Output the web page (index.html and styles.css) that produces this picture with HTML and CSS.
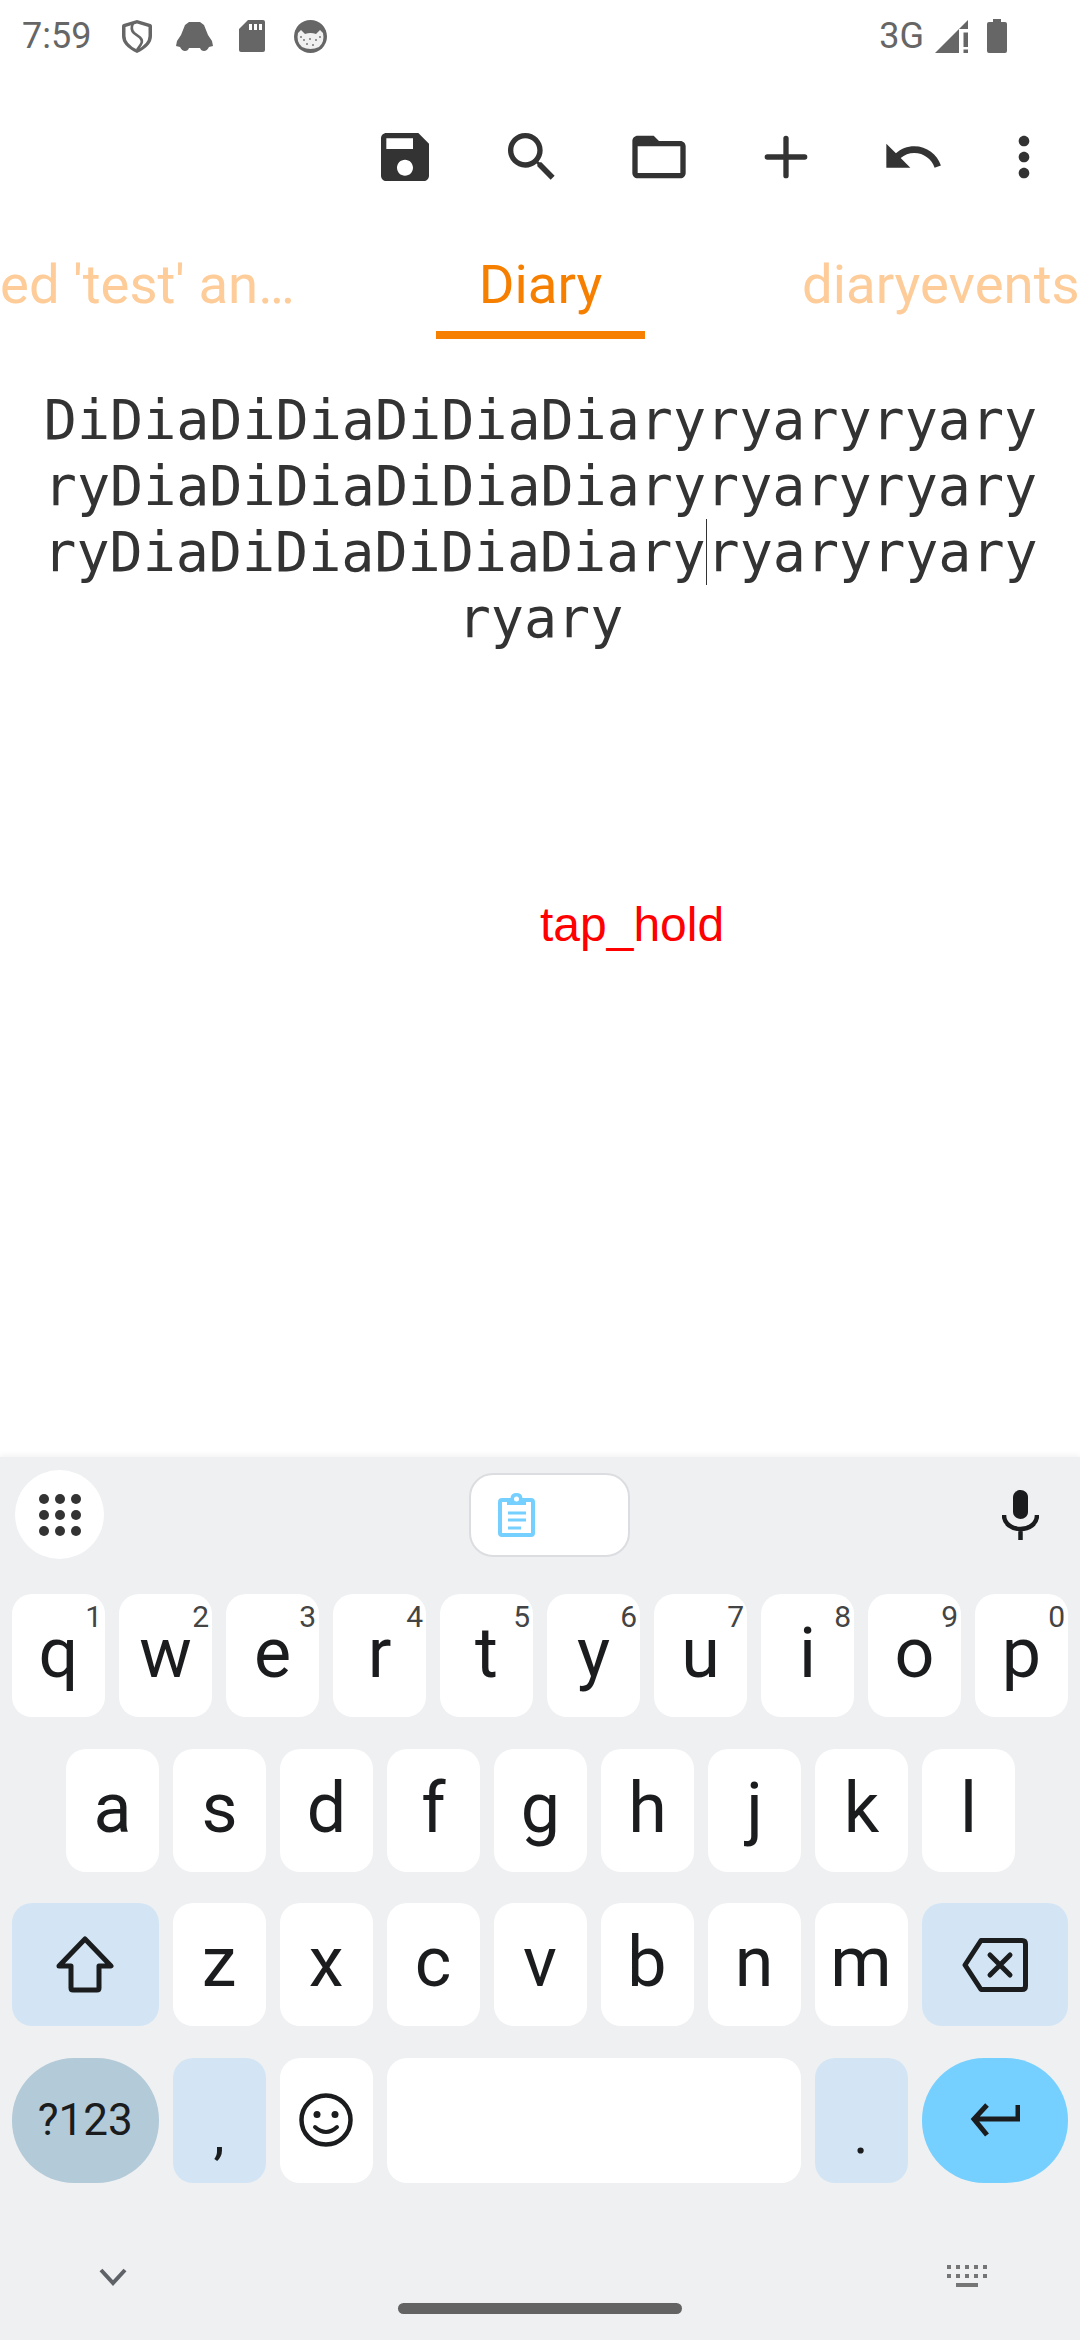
FILE: index.html
```html
<!DOCTYPE html>
<html>
<head>
	<title>Diary</title>
	<meta name="viewport" content="width=device-width, initial-scale=1" />
	<link rel="stylesheet" href="styles.css">
</head>
<body>
	<div class="App">

		<div class="StatusBar">
			<span class="Time">7:59</span>
			<svg class="StatusIcon Shield" viewBox="0 0 30 33"><path d="M15 0 L28.500 4 Q30 4.500 30 6 V16 Q30 26 15 33 Q0 26 0 16 V6 Q0 4.500 1.500 4 Z M15 3.500 L3.500 7 V16 Q3.500 24 15 29.500 Q26.500 24 26.500 16 V7 Z" fill-rule="evenodd"/><path d="M11 3.500 Q8 9 12 13 L18 17.500 Q21.500 21 18.500 25 L15 30" fill="none" stroke="#666" stroke-width="2.600"/></svg>
			<svg class="StatusIcon Blob" viewBox="0 0 37 30"><path d="M13 1 H24 L28 4 L32 14 L36 20 L37 25 L33 26 Q31 30 28 30 Q25 30 24 27 H13 Q12 30 9 30 Q6 30 4 26 L0 25 L1 20 L5 14 L9 4 Z"/></svg>
			<svg class="StatusIcon Sdcard" viewBox="0 0 26 32"><path d="M9 0 H24 Q26 0 26 2 V30 Q26 32 24 32 H2 Q0 32 0 30 V9 Z M10 4 V10 H13 V4 Z M15 4 V10 H18 V4 Z M20 4 V10 H23 V4 Z" fill-rule="evenodd"/></svg>
			<svg class="StatusIcon Cat" viewBox="0 0 33 33"><circle cx="16.500" cy="16.500" r="16.500"/><path d="M4 13 L7 10 L11 14 Q16.500 12 22 14 L26 10 L29 13 Q31 22 25 27 Q16.500 31 8 27 Q2 22 4 13 Z" fill="#f0f0f0"/><g fill="#777"><circle cx="10" cy="20" r="1"/><circle cx="16" cy="19" r="1"/><circle cx="22" cy="20" r="1"/><circle cx="13" cy="24" r="1"/><circle cx="19" cy="25" r="1"/><circle cx="7" cy="17" r="1"/><circle cx="26" cy="17" r="1"/></g></svg>
			<span class="StatusSpacer"></span>
			<span class="NetType">3G</span>
			<svg class="StatusIcon Signal" viewBox="0 0 33 33"><path d="M33 0 V9 H24 V33 H0 Z"/><path d="M28.500 12.500 H33 V27 H28.500 Z M28.500 29.500 H33 V33 H28.500 Z"/></svg>
			<svg class="StatusIcon Battery" viewBox="0 0 20 34"><path d="M6 0 H14 V3 H18 Q20 3 20 5 V32 Q20 34 18 34 H2 Q0 34 0 32 V5 Q0 3 2 3 H6 Z"/></svg>
		</div>

		<div class="Toolbar">
			<button class="ToolButton"><svg viewBox="0 0 24 24"><path d="M17 3H5c-1.110 0-2 .9-2 2v14c0 1.100.89 2 2 2h14c1.100 0 2-.9 2-2V7l-4-4zm-5 16c-1.660 0-3-1.340-3-3s1.340-3 3-3 3 1.340 3 3-1.340 3-3 3zm3-10H5V5h10v4z"/></svg></button>
			<button class="ToolButton"><svg viewBox="0 0 24 24"><path d="M15.500 14h-.79l-.28-.27C15.410 12.590 16 11.110 16 9.500 16 5.910 13.090 3 9.500 3S3 5.910 3 9.500 5.910 16 9.500 16c1.610 0 3.090-.59 4.230-1.570l.27.28v.79l5 4.990L20.490 19l-4.990-5zm-6 0C7.010 14 5 11.990 5 9.500S7.010 5 9.500 5 14 7.010 14 9.500 11.990 14 9.500 14z"/></svg></button>
			<button class="ToolButton"><svg viewBox="0 0 24 24"><path d="M20 6h-8l-2-2H4c-1.100 0-1.990.9-1.990 2L2 18c0 1.100.9 2 2 2h16c1.100 0 2-.9 2-2V8c0-1.100-.9-2-2-2zm0 12H4V8h16v10z"/></svg></button>
			<button class="ToolButton"><svg viewBox="0 0 24 24"><path d="M5 12h14M12 5v14" fill="none" stroke="#333" stroke-width="2" stroke-linecap="round"/></svg></button>
			<button class="ToolButton"><svg viewBox="0 0 24 24"><path d="M12.500 8c-2.650 0-5.050.99-6.900 2.600L2 7v9h9l-3.620-3.620c1.390-1.160 3.160-1.880 5.120-1.880 3.540 0 6.550 2.310 7.600 5.500l2.370-.78C21.080 11.030 17.150 8 12.500 8z"/></svg></button>
			<button class="ToolButton MoreButton"><svg viewBox="0 0 24 24"><path d="M12 8c1.100 0 2-.9 2-2s-.9-2-2-2-2 .9-2 2 .9 2 2 2zm0 2c-1.100 0-2 .9-2 2s.9 2 2 2 2-.9 2-2-.9-2-2-2zm0 6c-1.100 0-2 .9-2 2s.9 2 2 2 2-.9 2-2-.9-2-2-2z"/></svg></button>
		</div>

		<div class="Tabs">
			<div class="Tab TabLeft">ed 'test' an…</div>
			<div class="Tab TabActive">Diary</div>
			<div class="Tab TabRight">diaryevents</div>
		</div>

		<div class="Editor">
			<div class="EditorText">DiDiaDiDiaDiDiaDiaryryaryryary<br>ryDiaDiDiaDiDiaDiaryryaryryary<br>ryDiaDiDiaDiDiaDiary<span class="Caret"></span>ryaryryary<br>ryary</div>
			<div class="Toast">tap_hold</div>
		</div>

		<div class="Keyboard">
			<div class="KeyTools">
				<div class="ToolCircle">
					<svg viewBox="0 0 42 42" width="42" height="42"><g fill="#333"><circle cx="5" cy="5" r="5"/><circle cx="21" cy="5" r="5"/><circle cx="37" cy="5" r="5"/><circle cx="5" cy="21" r="5"/><circle cx="21" cy="21" r="5"/><circle cx="37" cy="21" r="5"/><circle cx="5" cy="37" r="5"/><circle cx="21" cy="37" r="5"/><circle cx="37" cy="37" r="5"/></g></svg>
				</div>
				<div class="ClipButton">
					<svg viewBox="0 0 37 44" width="37" height="44"><path d="M12.500 5 Q13 0 18.500 0 Q24 0 24.500 5 H33 Q37 5 37 9 V40 Q37 44 33 44 H4 Q0 44 0 40 V9 Q0 5 4 5 Z M18.500 3.500 A2.500 2.500 0 1 0 18.500 8.500 A2.500 2.500 0 1 0 18.500 3.500 Z M4 9 V40 H33 V9 H28 V12 H9 V9 Z M10 18.500 H28 V21.500 H10 Z M10 25.500 H28 V28.500 H10 Z M10 33.500 H23 V36.500 H10 Z" fill="#76d0ff" fill-rule="evenodd"/></svg>
				</div>
				<div class="MicButton">
					<svg viewBox="0 0 37 50" width="37" height="50"><path d="M18.500 0 C22.500 0 26 3 26 7 V22 C26 26 22.500 29 18.500 29 C14.500 29 11 26 11 22 V7 C11 3 14.500 0 18.500 0 Z" fill="#1a1c1e"/><path d="M2 25 C2 34 10 39 18.500 39 C27 39 35 34 35 25 M18.500 39 V50" fill="none" stroke="#1a1c1e" stroke-width="4.500"/></svg>
				</div>
			</div>

			<div class="KeyRows">
				<div class="KeyRow">
					<div class="Key">q<sup class="Hint">1</sup></div>
					<div class="Key">w<sup class="Hint">2</sup></div>
					<div class="Key">e<sup class="Hint">3</sup></div>
					<div class="Key">r<sup class="Hint">4</sup></div>
					<div class="Key">t<sup class="Hint">5</sup></div>
					<div class="Key">y<sup class="Hint">6</sup></div>
					<div class="Key">u<sup class="Hint">7</sup></div>
					<div class="Key">i<sup class="Hint">8</sup></div>
					<div class="Key">o<sup class="Hint">9</sup></div>
					<div class="Key">p<sup class="Hint">0</sup></div>
				</div>
				<div class="KeyRow RowIndent">
					<div class="Key">a</div>
					<div class="Key">s</div>
					<div class="Key">d</div>
					<div class="Key">f</div>
					<div class="Key">g</div>
					<div class="Key">h</div>
					<div class="Key">j</div>
					<div class="Key">k</div>
					<div class="Key">l</div>
				</div>
				<div class="KeyRow">
					<div class="Key Wide Special">
						<svg viewBox="0 0 58 58" width="58" height="58"><path d="M29 3 L55 30 H43 V52 Q43 54 41 54 H17 Q15 54 15 52 V30 H3 Z" fill="none" stroke="#1a1c1e" stroke-width="5" stroke-linejoin="round"/></svg>
					</div>
					<div class="Key">z</div>
					<div class="Key">x</div>
					<div class="Key">c</div>
					<div class="Key">v</div>
					<div class="Key">b</div>
					<div class="Key">n</div>
					<div class="Key">m</div>
					<div class="Key Wide Special">
						<svg viewBox="0 0 66 54" width="66" height="54"><path d="M19 2.500 H60 Q63.500 2.500 63.500 6 V48 Q63.500 51.500 60 51.500 H19 L3 27 Z" fill="none" stroke="#1a1c1e" stroke-width="5" stroke-linejoin="round"/><path d="M28 17 L48 37 M48 17 L28 37" fill="none" stroke="#1a1c1e" stroke-width="5" stroke-linecap="round"/></svg>
					</div>
				</div>
				<div class="KeyRow LastRow">
					<div class="Key Wide Pill Symbols">?123</div>
					<div class="Key Special Punct">,</div>
					<div class="Key">
						<svg viewBox="0 0 54 54" width="54" height="54"><circle cx="27" cy="27" r="24.500" fill="none" stroke="#1a1c1e" stroke-width="4.500"/><circle cx="18" cy="21.500" r="3.500" fill="#1a1c1e"/><circle cx="36" cy="21.500" r="3.500" fill="#1a1c1e"/><path d="M16 34 Q27 44 38 34" fill="none" stroke="#1a1c1e" stroke-width="4" stroke-linecap="round"/></svg>
					</div>
					<div class="Key Space"></div>
					<div class="Key Special Punct">.</div>
					<div class="Key Wide Pill Enter">
						<svg viewBox="0 0 50 34" width="50" height="34"><path d="M48 2 V16 H5 M17 2 L4 16 L17 32" fill="none" stroke="#1a1c1e" stroke-width="5"/></svg>
					</div>
				</div>
			</div>

			<div class="NavBar">
				<svg class="NavChevron" viewBox="0 0 28 18" width="28" height="18"><path d="M2 2 L14 15 L26 2" fill="none" stroke="#5f6368" stroke-width="4"/></svg>
				<div class="HomeBar"></div>
				<svg class="NavKeyboard" viewBox="0 0 40 24" width="40" height="24"><g fill="#757575"><rect x="0" y="0" width="4" height="4"/><rect x="9" y="0" width="4" height="4"/><rect x="18" y="0" width="4" height="4"/><rect x="27" y="0" width="4" height="4"/><rect x="36" y="0" width="4" height="4"/><rect x="0" y="9" width="4" height="4"/><rect x="9" y="9" width="4" height="4"/><rect x="18" y="9" width="4" height="4"/><rect x="27" y="9" width="4" height="4"/><rect x="36" y="9" width="4" height="4"/><rect x="9" y="18" width="22" height="4"/></g></svg>
			</div>
		</div>

	</div>
</body>
</html>
```

FILE: styles.css
```css
:root
{
	--orange: #f77f00;
	--orangeFaded: #fdcc99;
	--keyInk: #1a1c1e;
	--keyBack: #eff0f2;
	--keySpecial: #d3e5f4;
}

html, body
{
	margin: 0;
	padding: 0;
	background: #fff;
}

.App
{
	width: 1080px;
	height: 2340px;
	display: flex;
	flex-direction: column;
	overflow: hidden;
	font-family: Roboto, sans-serif;
}

/* status bar */

.StatusBar
{
	height: 72px;
	padding: 0 73px 0 22px;
	display: flex;
	align-items: center;
	flex: none;
	color: #666;
}

.Time
{
	font-size: 36px;
	width: 100px;
}

.StatusIcon
{
	fill: #666;
	display: block;
	flex: none;
}

.Shield		{	width: 30px;	height: 33px;	margin-right: 24px;	}
.Blob		{	width: 37px;	height: 30px;	margin-right: 26px;	}
.Sdcard		{	width: 26px;	height: 32px;	margin-right: 29px;	}
.Cat		{	width: 33px;	height: 33px;	}
.Signal		{	width: 33px;	height: 33px;	margin-right: 19px;	}
.Battery	{	width: 20px;	height: 34px;	}

.StatusSpacer
{
	flex: 1;
}

.NetType
{
	font-size: 36px;
	margin-right: 11px;
}

/* action bar */

.Toolbar
{
	height: 169px;
	flex: none;
	display: flex;
	justify-content: flex-end;
	align-items: center;
	padding-right: 9px;
}

.ToolButton
{
	width: 127px;
	height: 64px;
	padding: 0;
	border: 0;
	background: none;
	display: flex;
	justify-content: center;
}

.ToolButton svg
{
	width: 64px;
	height: 64px;
	flex: none;
	fill: #333;
}

.MoreButton
{
	width: 95px;
}

/* tabs */

.Tabs
{
	display: grid;
	grid-template-columns: 436px 209px 435px;
	height: 98px;
	flex: none;
	font-size: 54.500px;
	line-height: 86px;
	overflow: hidden;
}

.Tab
{
	white-space: nowrap;
	color: var(--orangeFaded);
	overflow: hidden;
}

.TabLeft
{
	text-align: right;
	padding-right: 144px;
	box-sizing: border-box;
}

.TabActive
{
	text-align: center;
	color: var(--orange);
	border-bottom: 8px solid var(--orange);
}

.TabRight
{
	padding-left: 157px;
}

/* text area */

.Editor
{
	flex: 1;
	position: relative;
}

.EditorText
{
	padding: 48px 0 0 1px;
	font-family: "DejaVu Sans Mono", monospace;
	font-size: 55px;
	line-height: 66px;
	text-align: center;
	white-space: nowrap;
	color: #333;
}

.Caret
{
	display: inline-block;
	width: 0;
	height: 66px;
	border-left: 1px solid #333;
	vertical-align: top;
}

.Toast
{
	position: absolute;
	left: 540px;
	top: 558px;
	font-family: "Liberation Sans", Arial, sans-serif;
	font-size: 48px;
	color: #f00;
}

/* keyboard */

.Keyboard
{
	height: 883px;
	flex: none;
	background: var(--keyBack);
	box-shadow: 0 -2px 6px rgba(0,0,0,0.05);
	position: relative;
	display: flex;
	flex-direction: column;
}

.KeyTools
{
	height: 137px;
	flex: none;
	padding: 13px 15px 0 15px;
	box-sizing: border-box;
	display: flex;
	align-items: flex-start;
}

.ToolCircle
{
	width: 89px;
	height: 89px;
	border-radius: 50%;
	background: #fff;
	display: flex;
	align-items: center;
	justify-content: center;
}

.ClipButton
{
	width: 161px;
	height: 84px;
	margin: 3px 0 0 365px;
	box-sizing: border-box;
	border: 2px solid #dcdde0;
	border-radius: 24px;
	background: #fff;
	display: flex;
	align-items: center;
	padding-left: 27px;
}

.MicButton
{
	margin-left: auto;
	width: 89px;
	height: 89px;
	display: flex;
	align-items: center;
	justify-content: center;
}

.KeyRows
{
	display: flex;
	flex-direction: column;
	gap: 31.500px;
	padding: 0 12px;
}

.KeyRow
{
	height: 123px;
	display: flex;
	gap: 14px;
}

.LastRow
{
	height: 125px;
}

.RowIndent
{
	padding: 0 54px;
}

.Key
{
	width: 93px;
	flex: none;
	position: relative;
	background: #fff;
	border-radius: 20px;
	display: flex;
	align-items: center;
	justify-content: center;
	box-sizing: border-box;
	padding-bottom: 5px;
	font-size: 70px;
	color: var(--keyInk);
}

.Key svg
{
	margin-top: 5px;
}

.Wide
{
	width: 146.500px;
}

.Special
{
	background: var(--keySpecial);
}

.Space
{
	flex: 1;
	width: auto;
}

.Pill
{
	border-radius: 62px;
}

.Symbols
{
	background: #b3cad8;
	font-size: 44px;
	padding-bottom: 0;
}

.Enter
{
	background: #76d0ff;
}

.Punct
{
	align-items: flex-end;
	font-size: 56px;
	padding-bottom: 16px;
}

.Hint
{
	position: absolute;
	top: 6px;
	right: 3px;
	font-size: 30px;
	line-height: 34px;
	color: #444;
}

/* nav bar */

.NavBar
{
	flex: 1;
	display: flex;
	align-items: center;
	padding: 32px 93px 0 99px;
}

.HomeBar
{
	position: absolute;
	left: 398px;
	top: 846px;
	width: 284px;
	height: 11px;
	border-radius: 6px;
	background: #636363;
}

.NavKeyboard
{
	margin-left: auto;
}
```
